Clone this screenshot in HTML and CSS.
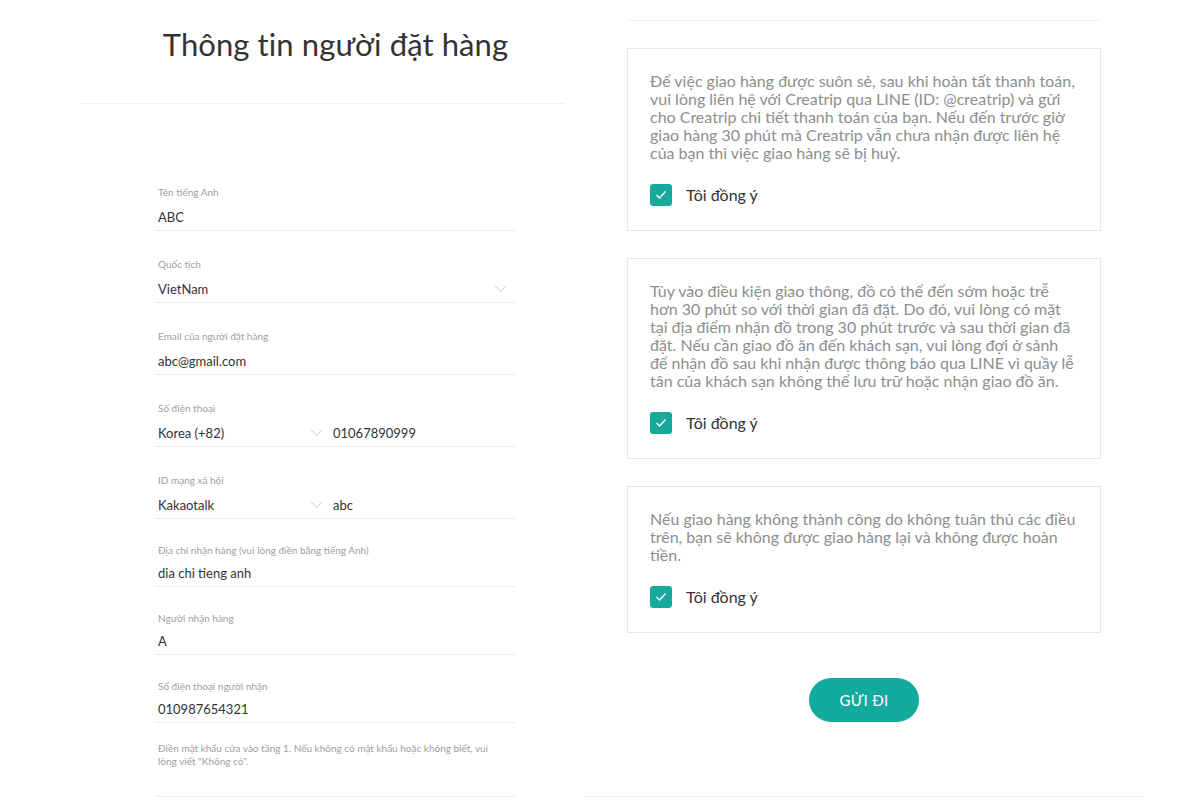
FILE: index.html
```html
<!DOCTYPE html>
<html lang="vi">
<head>
<meta charset="utf-8">
<title>Thông tin người đặt hàng</title>
<link rel="stylesheet" href="styles.css">
</head>
<body>
<div class="page">
  <section class="left">
    <header class="title-bar">
      <h1 class="title">Thông tin người đặt hàng</h1>
    </header>
    <form class="form">
      <div class="field">
        <div class="label">Tên tiếng Anh</div>
        <div class="value">ABC</div>
      </div>
      <div class="field">
        <div class="label">Quốc tịch</div>
        <div class="value row">
          <span class="grow">VietNam</span>
          <svg class="chev" width="13" height="8" viewBox="0 0 13 8"><polyline points="1,1 6.5,6.5 12,1" fill="none" stroke="#c8c8c8" stroke-width="1"/></svg>
        </div>
      </div>
      <div class="field">
        <div class="label">Email của người đặt hàng</div>
        <div class="value">abc@gmail.com</div>
      </div>
      <div class="field">
        <div class="label">Số điện thoại</div>
        <div class="value row">
          <span class="select">Korea (+82)</span>
          <svg class="chev" width="13" height="8" viewBox="0 0 13 8"><polyline points="1,1 6.5,6.5 12,1" fill="none" stroke="#c8c8c8" stroke-width="1"/></svg>
          <span class="input">01067890999</span>
        </div>
      </div>
      <div class="field">
        <div class="label">ID mạng xã hội</div>
        <div class="value row">
          <span class="select">Kakaotalk</span>
          <svg class="chev" width="13" height="8" viewBox="0 0 13 8"><polyline points="1,1 6.5,6.5 12,1" fill="none" stroke="#c8c8c8" stroke-width="1"/></svg>
          <span class="input">abc</span>
        </div>
      </div>
      <div class="field compact">
        <div class="label">Địa chỉ nhận hàng (vui lòng điền bằng tiếng Anh)</div>
        <div class="value">dia chi tieng anh</div>
      </div>
      <div class="field compact">
        <div class="label">Người nhận hàng</div>
        <div class="value">A</div>
      </div>
      <div class="field compact">
        <div class="label">Số điện thoại người nhận</div>
        <div class="value">010987654321</div>
      </div>
      <div class="field note">
        <div class="label">Điền mật khẩu cửa vào tầng 1. Nếu không có mật khẩu hoặc không biết, vui<br>lòng viết "Không có".</div>
        <div class="value"></div>
      </div>
    </form>
  </section>

  <section class="right">
    <div class="top-rule"></div>
    <div class="notice">
      <p class="notice-text">Để việc giao hàng được suôn sẻ, sau khi hoàn tất thanh toán,<br>vui lòng liên hệ với Creatrip qua LINE (ID: @creatrip) và gửi<br>cho Creatrip chi tiết thanh toán của bạn. Nếu đến trước giờ<br>giao hàng 30 phút mà Creatrip vẫn chưa nhận được liên hệ<br>của bạn thì việc giao hàng sẽ bị huỷ.</p>
      <label class="agree"><span class="check"><svg width="12" height="10" viewBox="0 0 12 10"><polyline points="1.5,5 4.5,8 10.5,1.5" fill="none" stroke="#fff" stroke-width="1.4"/></svg></span>Tôi đồng ý</label>
    </div>
    <div class="notice">
      <p class="notice-text">Tùy vào điều kiện giao thông, đồ có thể đến sớm hoặc trễ<br>hơn 30 phút so với thời gian đã đặt. Do đó, vui lòng có mặt<br>tại địa điểm nhận đồ trong 30 phút trước và sau thời gian đã<br>đặt. Nếu cần giao đồ ăn đến khách sạn, vui lòng đợi ở sảnh<br>để nhận đồ sau khi nhận được thông báo qua LINE vì quầy lễ<br>tân của khách sạn không thể lưu trữ hoặc nhận giao đồ ăn.</p>
      <label class="agree"><span class="check"><svg width="12" height="10" viewBox="0 0 12 10"><polyline points="1.5,5 4.5,8 10.5,1.5" fill="none" stroke="#fff" stroke-width="1.4"/></svg></span>Tôi đồng ý</label>
    </div>
    <div class="notice">
      <p class="notice-text">Nếu giao hàng không thành công do không tuân thủ các điều<br>trên, bạn sẽ không được giao hàng lại và không được hoàn<br>tiền.</p>
      <label class="agree"><span class="check"><svg width="12" height="10" viewBox="0 0 12 10"><polyline points="1.5,5 4.5,8 10.5,1.5" fill="none" stroke="#fff" stroke-width="1.4"/></svg></span>Tôi đồng ý</label>
    </div>
    <div class="actions">
      <button class="submit" type="button">GỬI ĐI</button>
    </div>
  </section>
</div>
</body>
</html>
```

FILE: styles.css
```css
html, body {
  margin: 0;
  padding: 0;
  background: #fff;
}

body {
  font-family: "Lato", "Noto Sans", sans-serif;
  color: #333;
  width: 1200px;
  height: 800px;
  overflow: hidden;
}

.page {
  display: flex;
  align-items: flex-start;
  padding-left: 80px;
}

/* ---------- left column ---------- */
.left {
  width: 485px;
  flex: none;
}

.title-bar {
  padding: 24px 0 39px 26px;
  border-bottom: 1px solid #f0f0f0;
}

.title {
  margin: 0;
  text-align: center;
  font-size: 31px;
  line-height: 40px;
  font-weight: 400;
  color: #333;
  letter-spacing: 0.1px;
}

.form {
  margin: 55px 49px 0 75px;
}

.field {
  padding: 26px 3px 4px;
  border-bottom: 1px solid #eeeeee;
}

.field .label {
  font-size: 10px;
  line-height: 14px;
  color: #a0a0a0;
}

.field .value {
  margin-top: 9px;
  font-size: 13px;
  line-height: 18px;
  height: 18px;
  color: #333;
}

.field.compact {
  padding-top: 24px;
}

.field.compact .value {
  margin-top: 7px;
}

.field.note {
  padding-top: 19px;
}

.field.note .label {
  line-height: 13px;
}

.field.note .value {
  margin-top: 6px;
}

.row {
  display: flex;
  align-items: center;
}

.grow {
  flex: 1;
}

.select {
  width: 152px;
}

.chev {
  flex: none;
  margin-right: 10px;
}

.row .grow + .chev {
  margin-right: 6px;
}

/* ---------- right column ---------- */
.right {
  margin-left: 20px;
  width: 558px;
  flex: none;
  padding: 0 42px 74px;
  box-sizing: border-box;
  border-bottom: 1px solid #eeeeee;
}

.top-rule {
  height: 20px;
  border-bottom: 1px solid #f0f0f0;
  margin-bottom: 27px;
}

.notice {
  border: 1px solid #e6e6e6;
  padding: 23px 22px 24px;
  margin-bottom: 27px;
}

.notice-text {
  margin: 0;
  font-size: 16px;
  line-height: 18px;
  color: #8e8e8e;
  white-space: nowrap;
}

.agree {
  display: flex;
  align-items: center;
  margin-top: 22px;
  font-size: 16px;
  line-height: 22px;
  color: #333;
}

.check {
  width: 22px;
  height: 22px;
  border-radius: 3px;
  background: #17a99b;
  display: flex;
  align-items: center;
  justify-content: center;
  margin-right: 14px;
}

.actions {
  display: flex;
  justify-content: center;
  padding-top: 18px;
}

.submit {
  width: 110px;
  height: 44px;
  border: none;
  border-radius: 22px;
  background: #14ab9f;
  color: #fff;
  font-family: "Lato", "Noto Sans", sans-serif;
  font-size: 15px;
  letter-spacing: 0.3px;
  cursor: pointer;
}
```
